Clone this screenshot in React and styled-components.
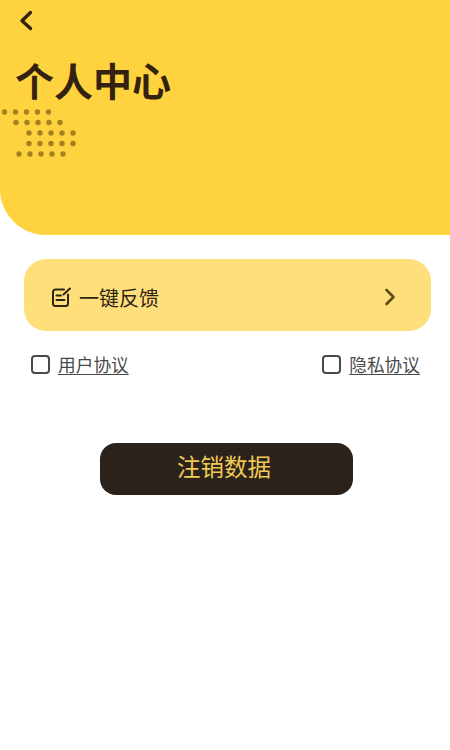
import React from "react";
import styled, { createGlobalStyle } from "styled-components";

const Global = createGlobalStyle`
  html, body { margin: 0; padding: 0; background: #fff; }
  body { font-family: "Noto Sans CJK SC", "Noto Sans", sans-serif; width: 450px; height: 750px; overflow: hidden; }
`;

const Page = styled.div`
  width: 450px;
  height: 750px;
  display: flex;
  flex-direction: column;
  background: #fff;
`;

const Header = styled.header`
  position: relative;
  height: 235px;
  box-sizing: border-box;
  padding: 9px 15px 0;
  background: #ffd23f;
  border-bottom-left-radius: 46px;
`;

const BackButton = styled.button`
  display: block;
  width: 20px;
  height: 24px;
  padding: 0;
  border: 0;
  background: none;
`;

const Title = styled.h1`
  margin: 18px 0 0;
  font-size: 39px;
  line-height: 56px;
  font-weight: 700;
  color: #33220f;
`;

const Dots = styled.svg`
  position: absolute;
  left: 0;
  top: 105px;
`;

const Content = styled.main`
  display: flex;
  flex-direction: column;
  padding: 24px 19px 0 24px;
`;

const FeedbackCard = styled.div`
  height: 72px;
  box-sizing: border-box;
  display: flex;
  align-items: center;
  gap: 7px;
  padding: 4px 35px 0 27px;
  background: #fedf7c;
  border-radius: 22px;
`;

const CardLabel = styled.span`
  flex: 1;
  padding-top: 2px;
  font-size: 20px;
  line-height: 28px;
  color: #2e2413;
`;

const Agreements = styled.div`
  display: flex;
  justify-content: space-between;
  margin-top: 20px;
  padding: 0 11px 0 7px;
`;

const Agreement = styled.label`
  display: flex;
  align-items: center;
  gap: 8px;
`;

const CheckBox = styled.span`
  width: 19px;
  height: 19px;
  box-sizing: border-box;
  border: 2px solid #4a4a4a;
  border-radius: 4px;
`;

const AgreementLink = styled.a`
  font-size: 17.7px;
  line-height: 27px;
  color: #4a4a4a;
  text-decoration: underline;
  text-underline-offset: 2px;
  text-decoration-thickness: 1px;
`;

const CancelButton = styled.button`
  align-self: flex-start;
  width: 253px;
  height: 52px;
  margin: 65px 0 0 76px;
  padding: 0 5px 6px 0;
  border: 0;
  border-radius: 16px;
  background: #2b221c;
  color: #f0ca55;
  font-family: inherit;
  font-size: 23.5px;
  line-height: 46px;
`;

const dotRows = [
  { y: 7, xs: [4.5, 15.5, 26.5, 37.5, 48.5] },
  { y: 17.5, xs: [16, 27, 38, 49, 60] },
  { y: 28, xs: [29, 40, 51, 62, 73] },
  { y: 38.5, xs: [29, 40, 51, 62, 73] },
  { y: 49, xs: [19, 30, 41, 52, 63] },
];

export default function App() {
  return (
    <Page>
      <Global />
      <Header>
        <BackButton aria-label="返回">
          <svg width="20" height="24" viewBox="0 0 20 24" fill="none">
            <path d="M15.5 3.5 L7 11.8 L15.5 19.5" stroke="#33220f" strokeWidth="3.4" strokeLinecap="round" strokeLinejoin="round" />
          </svg>
        </BackButton>
        <Title>个人中心</Title>
        <Dots width="80" height="56" viewBox="0 0 80 56">
          {dotRows.map((r) => r.xs.map((x) => <circle key={`${r.y}-${x}`} cx={x} cy={r.y} r="2.7" fill="#a5801f" />))}
        </Dots>
      </Header>
      <Content>
        <FeedbackCard>
          <svg width="21" height="21" viewBox="0 0 21 21" fill="none" stroke="#2e2413" strokeWidth="2" strokeLinecap="round" strokeLinejoin="round">
            <path d="M13 2.5 H4.5 A2.5 2.5 0 0 0 2 5 V16.5 A2.5 2.5 0 0 0 4.5 19 H14.5 A2.5 2.5 0 0 0 17 16.5 V7.5" />
            <path d="M12.5 7.5 L19 1.5" />
            <path d="M5.5 8.5 H10" />
            <path d="M5.5 13 H13.5" />
          </svg>
          <CardLabel>一键反馈</CardLabel>
          <svg width="12" height="20" viewBox="0 0 12 20" fill="none">
            <path d="M2.5 3 L9.5 10 L2.5 17" stroke="#5b4a18" strokeWidth="2.6" strokeLinecap="round" strokeLinejoin="round" />
          </svg>
        </FeedbackCard>
        <Agreements>
          <Agreement>
            <CheckBox />
            <AgreementLink>用户协议</AgreementLink>
          </Agreement>
          <Agreement>
            <CheckBox />
            <AgreementLink>隐私协议</AgreementLink>
          </Agreement>
        </Agreements>
        <CancelButton>注销数据</CancelButton>
      </Content>
    </Page>
  );
}
